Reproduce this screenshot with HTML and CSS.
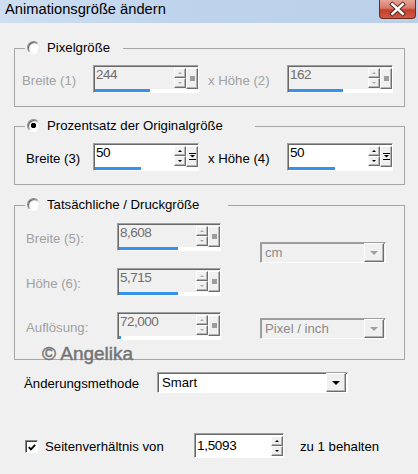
FILE: index.html
```html
<!DOCTYPE html>
<html lang="de">
<head>
<meta charset="utf-8">
<title>Animationsgröße ändern</title>
<link rel="stylesheet" href="styles.css">
</head>
<body>
<div class="window">
  <div class="titlebar">
    <span class="title">Animationsgröße ändern</span>
    <span class="close">
      <svg width="37" height="18" viewBox="0 0 37 18">
        <path d="M13 4 L24 14 M24 4 L13 14" stroke="#5a231b" stroke-width="4.6" stroke-linecap="square"/>
        <path d="M13 4 L24 14 M24 4 L13 14" stroke="#fff" stroke-width="2.6" stroke-linecap="square"/>
      </svg>
    </span>
  </div>

  <div class="content">
    <fieldset class="group g1">
      <legend class="legend l1"><span class="radio"></span><span class="legend-text">Pixelgröße</span></legend>
      <div class="row">
        <span class="lbl dis w78 pl7">Breite (1)</span>
        <div class="spin dis-spin">
          <div class="spin-main">
            <div class="spin-field">244</div>
            <div class="spin-arrows"><span class="arr up"></span><span class="arr down"></span></div>
            <div class="spin-extra"><span class="sq"></span></div>
          </div>
          <div class="spin-bar"><span style="width:55px"></span></div>
        </div>
        <span class="lbl dis w79 ml9">x Höhe (2)</span>
        <div class="spin dis-spin">
          <div class="spin-main">
            <div class="spin-field">162</div>
            <div class="spin-arrows"><span class="arr up"></span><span class="arr down"></span></div>
            <div class="spin-extra"><span class="sq"></span></div>
          </div>
          <div class="spin-bar"><span style="width:54px"></span></div>
        </div>
      </div>
    </fieldset>

    <fieldset class="group g2">
      <legend class="legend l2"><span class="radio on"></span><span class="legend-text">Prozentsatz der Originalgröße</span></legend>
      <div class="row">
        <span class="lbl w78 pl11">Breite (3)</span>
        <div class="spin">
          <div class="spin-main">
            <div class="spin-field">50</div>
            <div class="spin-arrows"><span class="arr up"></span><span class="arr down"></span></div>
            <div class="spin-extra">
              <svg class="extra-icon" width="7" height="9" viewBox="0 0 7 9"><path d="M0 1.5 H7 M0 7.5 H7" stroke="#000" stroke-width="1"/><path d="M1 3 H6 L3.5 5.5 Z" fill="#000"/></svg>
            </div>
          </div>
          <div class="spin-bar"><span style="width:46px"></span></div>
        </div>
        <span class="lbl w79 ml9">x Höhe (4)</span>
        <div class="spin">
          <div class="spin-main">
            <div class="spin-field">50</div>
            <div class="spin-arrows"><span class="arr up"></span><span class="arr down"></span></div>
            <div class="spin-extra">
              <svg class="extra-icon" width="7" height="9" viewBox="0 0 7 9"><path d="M0 1.5 H7 M0 7.5 H7" stroke="#000" stroke-width="1"/><path d="M1 3 H6 L3.5 5.5 Z" fill="#000"/></svg>
            </div>
          </div>
          <div class="spin-bar"><span style="width:46px"></span></div>
        </div>
      </div>
    </fieldset>

    <fieldset class="group g3">
      <legend class="legend l3"><span class="radio"></span><span class="legend-text">Tatsächliche / Druckgröße</span></legend>
      <div class="g3body">
        <div class="g3rows">
          <div class="row">
            <span class="lbl dis w102 pl11">Breite (5):</span>
            <div class="spin dis-spin narrow">
              <div class="spin-main">
                <div class="spin-field">8,608</div>
                <div class="spin-arrows"><span class="arr up"></span><span class="arr down"></span></div>
                <div class="spin-extra"><span class="sq"></span></div>
              </div>
              <div class="spin-bar"><span style="width:59px"></span></div>
            </div>
          </div>
          <div class="row r2">
            <span class="lbl dis w102 pl11">Höhe (6):</span>
            <div class="spin dis-spin narrow">
              <div class="spin-main">
                <div class="spin-field">5,715</div>
                <div class="spin-arrows"><span class="arr up"></span><span class="arr down"></span></div>
                <div class="spin-extra"><span class="sq"></span></div>
              </div>
              <div class="spin-bar"><span style="width:59px"></span></div>
            </div>
          </div>
          <div class="row r3">
            <span class="lbl dis w102 pl11">Auflösung:</span>
            <div class="spin dis-spin narrow">
              <div class="spin-main">
                <div class="spin-field">72,000</div>
                <div class="spin-arrows"><span class="arr up"></span><span class="arr down"></span></div>
                <div class="spin-extra"><span class="sq"></span></div>
              </div>
              <div class="spin-bar"><span style="width:2px"></span></div>
            </div>
          </div>
        </div>
        <div class="units">
          <div class="combo dis-combo u1"><span class="combo-text">cm</span><span class="combo-btn"><span class="tri"></span></span></div>
          <div class="combo dis-combo u2"><span class="combo-text">Pixel / inch</span><span class="combo-btn"><span class="tri"></span></span></div>
        </div>
      </div>
      <div class="watermark">© Angelika</div>
    </fieldset>

    <div class="method">
      <span class="method-lbl">Änderungsmethode</span>
      <div class="combo method-combo"><span class="combo-text">Smart</span><span class="combo-btn"><span class="tri"></span></span></div>
    </div>

    <div class="keep">
      <span class="check">
        <svg width="11" height="11" viewBox="0 0 11 11"><path d="M2 5 L4.3 7.5 L9 2.5" stroke="#000" stroke-width="2" fill="none"/></svg>
      </span>
      <span class="keep-lbl">Seitenverhältnis von</span>
      <div class="spin small">
        <div class="spin-main">
          <div class="spin-field">1,5093</div>
          <div class="spin-arrows"><span class="arr up"></span><span class="arr down"></span></div>
        </div>
      </div>
      <span class="keep-tail">zu 1 behalten</span>
    </div>
  </div>
</div>
</body>
</html>
```

FILE: styles.css
```css
* { box-sizing: border-box; }

html, body {
  margin: 0;
  padding: 0;
  background: #f0f0f0;
}

body {
  width: 418px;
  height: 474px;
  overflow: hidden;
  font-family: "Liberation Sans", Arial, sans-serif;
  font-size: 13.2px;
  color: #000;
}

/* Title bar */
.titlebar {
  height: 23px;
  display: flex;
  justify-content: space-between;
  align-items: flex-start;
  background: linear-gradient(to right, #cfdff1 0%, #bfd4ec 40%, #bad0e9 100%);
}

.title {
  font-size: 14.7px;
  line-height: 18px;
  padding-left: 5px;
  color: #000;
}

.close {
  width: 37px;
  height: 19px;
  margin-right: 2px;
  border: 1px solid #6e2a20;
  border-top: none;
  border-radius: 0 0 4px 4px;
  background: linear-gradient(#e6a596 0%, #d77a68 45%, #c4402e 55%, #cf5a44 100%);
  display: flex;
  align-items: center;
  justify-content: center;
}

.close svg { display: block; }

/* Group boxes */
.group {
  margin: 0 0 0 14px;
  width: 391px;
  min-width: 0;
  border: 1px solid #a6a6a6;
}

.g1 { margin-top: 18px; padding: 10px 0 13px 0; }
.g2 { margin-top: 12px; padding: 10px 0 13px 0; }
.g3 { margin-top: 13px; padding: 11px 0 0 0; }

.legend {
  height: 14px;
  margin-left: 10px;
  padding: 0 0 0 2px;
  line-height: 14px;
  white-space: nowrap;
}

.l1 { width: 98px; }
.l2 { width: 230px; }
.l3 { width: 203px; }

.legend-text {
  display: inline-block;
  vertical-align: top;
  margin-left: 7px;
}

.radio {
  display: inline-block;
  vertical-align: top;
  width: 13px;
  height: 13px;
  margin-top: 0;
  border-radius: 50%;
  border: 1px solid;
  border-color: #8a8a8a #e8e8e8 #ffffff #8a8a8a;
  box-shadow: inset 1px 1px 1px #5a5a5a;
  background: #fff;
}

.radio.on {
  background: radial-gradient(circle at 50% 50%, #000 0, #000 2.4px, #fff 3px);
}

/* Rows */
.row {
  display: flex;
  align-items: center;
}

.lbl {
  padding-top: 2px;
  white-space: nowrap;
}

.dis { color: #a0a0a0; }

.w78 { width: 78px; }
.w79 { width: 79px; }
.w102 { width: 102px; }
.pl7 { padding-left: 7px; }
.pl11 { padding-left: 11px; }
.ml9 { margin-left: 9px; }

/* Spin control */
.spin {
  width: 106px;
  height: 28px;
  display: flex;
  flex-direction: column;
  padding: 1px 0 0 1px;
  border: 1px solid;
  border-color: #a0a0a0 #ffffff #ffffff #a0a0a0;
  box-shadow: inset 1px 1px 0 #696969;
  background: #fff;
}

.spin.narrow { width: 104px; }

.spin-main {
  height: 22px;
  display: flex;
  background: #fff;
}

.dis-spin .spin-main { background: #f0f0f0; }

.spin-field {
  flex: 1;
  padding-left: 1px;
  font-size: 13.5px;
  letter-spacing: -0.5px;
  line-height: 16px;
  color: #000;
  white-space: nowrap;
}

.dis-spin .spin-field { color: #6d6d6d; }

.spin-arrows {
  width: 12px;
  padding-top: 1px;
  display: flex;
  flex-direction: column;
}

.arr {
  width: 12px;
  height: 10px;
  border: 1px solid;
  border-color: #ffffff #6d6d6d #6d6d6d #ffffff;
  box-shadow: inset -1px -1px 0 #b4b4b4;
  background: #f0f0f0;
  display: flex;
  align-items: center;
  justify-content: center;
}

.arr::before {
  content: "";
  display: block;
  width: 0;
  height: 0;
  border-left: 2px solid transparent;
  border-right: 2px solid transparent;
}

.arr.up::before { border-bottom: 2px solid #000; }
.arr.down::before { border-top: 2px solid #000; }

.dis-spin .arr.up::before { border-bottom-color: #a8a8a8; }
.dis-spin .arr.down::before { border-top-color: #a8a8a8; }

.spin-extra {
  width: 12px;
  height: 21px;
  margin-top: 1px;
  border: 1px solid;
  border-color: #ffffff #6d6d6d #6d6d6d #ffffff;
  box-shadow: inset -1px -1px 0 #b4b4b4;
  background: #f0f0f0;
  display: flex;
  align-items: center;
  justify-content: center;
}

.sq {
  width: 5px;
  height: 5px;
  background: #9c9c9c;
}

.extra-icon { display: block; }

.spin-bar {
  height: 3px;
  background: #fff;
}

.spin-bar span {
  display: block;
  height: 3px;
  background: #3392ee;
}

/* small spin */
.spin.small {
  width: 90px;
  height: 25px;
  padding: 1px 0 0 1px;
}

.spin.small .spin-main {
  height: 22px;
}

.spin.small .spin-field {
  line-height: 22px;
  padding-left: 1px;
  letter-spacing: -0.3px;
}

.spin.small .spin-arrows {
  padding-top: 1px;
}

/* Group 3 */
.g3body {
  display: flex;
}

.g3rows {
  display: flex;
  flex-direction: column;
}

.r2 { margin-top: 17px; }
.r3 { margin-top: 16px; }

.units {
  margin-left: 39px;
  display: flex;
  flex-direction: column;
}

.u1 { margin-top: 19px; }
.u2 { margin-top: 55px; }

/* Combo boxes */
.combo {
  height: 21px;
  display: flex;
  border: 1px solid;
  border-color: #a0a0a0 #ffffff #ffffff #a0a0a0;
  box-shadow: inset 1px 1px 0 #696969;
  background: #fff;
  padding: 1px 1px 1px 1px;
}

.dis-combo {
  width: 126px;
  background: #f0f0f0;
  box-shadow: inset 1px 1px 0 #9a9a9a;
}

.combo-text {
  flex: 1;
  padding-left: 3px;
  line-height: 18px;
  white-space: nowrap;
}

.dis-combo .combo-text { color: #8a8a8a; }

.combo-btn {
  width: 20px;
  height: 19px;
  margin-top: -1px;
  border: 1px solid;
  border-color: #ffffff #6d6d6d #6d6d6d #ffffff;
  box-shadow: inset -1px -1px 0 #b4b4b4;
  background: #f0f0f0;
  display: flex;
  align-items: center;
  justify-content: center;
}

.tri {
  width: 0;
  height: 0;
  border-left: 4px solid transparent;
  border-right: 4px solid transparent;
  border-top: 4px solid #000;
}

.dis-combo .tri { border-top-color: #a0a0a0; }

/* Watermark */
.watermark {
  margin: 4px 0 -4px 27px;
  font-size: 19px;
  line-height: 19px;
  color: #747474;
  -webkit-text-stroke: 0.45px #747474;
  white-space: nowrap;
}

/* Bottom rows */
.method {
  display: flex;
  align-items: center;
  height: 21px;
  margin: 12px 0 0 24px;
}

.method-lbl {
  width: 133px;
  padding-top: 2px;
}

.method-combo {
  width: 191px;
}

.keep {
  display: flex;
  align-items: center;
  height: 25px;
  margin: 40px 0 0 25px;
}

.check {
  width: 13px;
  height: 13px;
  margin-top: 2px;
  border: 1px solid;
  border-color: #8a8a8a #ffffff #ffffff #8a8a8a;
  box-shadow: inset 1px 1px 0 #404040;
  background: #fff;
  display: flex;
  align-items: center;
  justify-content: center;
}

.check svg { display: block; margin: 1px 0 0 1px; }

.keep-lbl {
  width: 149px;
  margin-left: 7px;
  padding-top: 2px;
}

.keep-tail {
  margin-left: 16px;
  padding-top: 2px;
}
```
